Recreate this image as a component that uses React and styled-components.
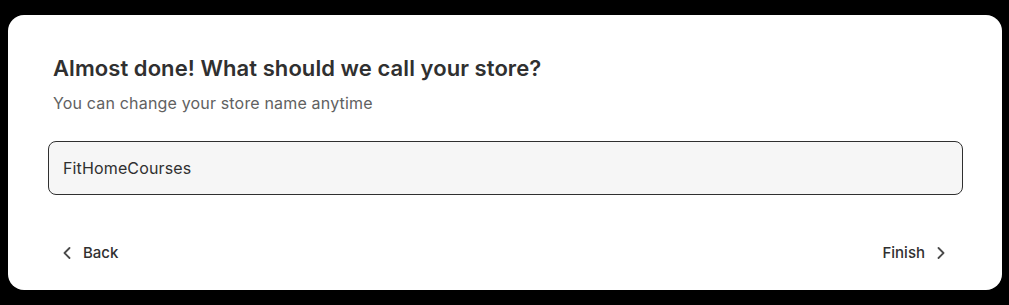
import React, { useState } from 'react'
import styled, { createGlobalStyle } from 'styled-components'

const GlobalStyle = createGlobalStyle`
  html, body {
    margin: 0;
    background: #000;
  }
  body {
    padding: 15px 7px 15px 8px;
    font-family: Inter, "Noto Sans", sans-serif;
  }
`

const Card = styled.section`
  background: #fff;
  border-radius: 16px;
  height: 275px;
  box-sizing: border-box;
  padding: 39px 39px 0 40px;
  display: flex;
  flex-direction: column;
`

const Header = styled.div`
  padding-left: 5px;
  h2 {
    margin: 0;
    font-size: 22px;
    font-weight: 600;
    color: #303030;
    line-height: 28px;
    letter-spacing: 0.07px;
  }
  p {
    margin: 10px 0 0;
    font-size: 16px;
    color: #616161;
    line-height: 22px;
    letter-spacing: 0.17px;
  }
`

const Field = styled.input`
  margin-top: 27px;
  height: 54px;
  box-sizing: border-box;
  border: 1px solid #303030;
  border-radius: 8px;
  background: #f6f6f6;
  padding: 0 14px;
  font-family: inherit;
  font-size: 16px;
  letter-spacing: 0.14px;
  color: #303030;
  outline: none;
`

const Footer = styled.div`
  margin-top: 42px;
  display: flex;
  justify-content: space-between;
  align-items: center;
`

const NavButton = styled.button`
  display: flex;
  align-items: center;
  gap: 11px;
  border: none;
  background: none;
  padding: 6px ${p => (p.$next ? '17px' : '16px')} 6px 14px;
  font-family: inherit;
  font-size: 15px;
  line-height: 20px;
  font-weight: 500;
  color: #303030;
  cursor: pointer;
  svg {
    width: 10px;
    height: 14px;
    stroke: #4a4a4a;
  }
`

const Chevron = ({ dir }) => (
  <svg viewBox="0 0 10 14" fill="none" strokeWidth="1.8" strokeLinecap="round" strokeLinejoin="round">
    {dir === 'left' ? <path d="M7.5 2 2.5 7 7.5 12" /> : <path d="M2.5 2 7.5 7 2.5 12" />}
  </svg>
)

export default function App() {
  const [name, setName] = useState('FitHomeCourses')
  return (
    <>
      <GlobalStyle />
      <Card>
        <Header>
          <h2>Almost done! What should we call your store?</h2>
          <p>You can change your store name anytime</p>
        </Header>
        <Field value={name} onChange={e => setName(e.target.value)} />
        <Footer>
          <NavButton>
            <Chevron dir="left" />
            Back
          </NavButton>
          <NavButton $next>
            Finish
            <Chevron dir="right" />
          </NavButton>
        </Footer>
      </Card>
    </>
  )
}
